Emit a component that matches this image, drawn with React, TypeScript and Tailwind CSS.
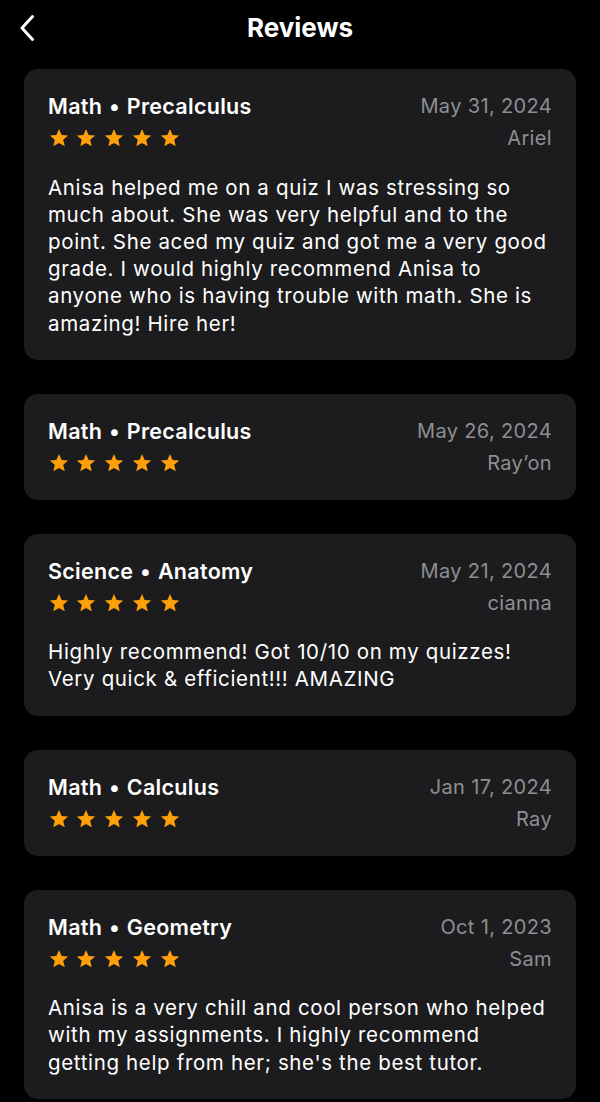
import React from "react";

type Review = {
  subject: string;
  topic: string;
  date: string;
  name: string;
  body?: string[];
};

const reviews: Review[] = [
  {
    subject: "Math",
    topic: "Precalculus",
    date: "May 31, 2024",
    name: "Ariel",
    body: [
      "Anisa helped me on a quiz I was stressing so",
      "much about. She was very helpful and to the",
      "point. She aced my quiz and got me a very good",
      "grade. I would highly recommend Anisa to",
      "anyone who is having trouble with math. She is",
      "amazing! Hire her!",
    ],
  },
  { subject: "Math", topic: "Precalculus", date: "May 26, 2024", name: "Ray\u2019on" },
  {
    subject: "Science",
    topic: "Anatomy",
    date: "May 21, 2024",
    name: "cianna",
    body: ["Highly recommend! Got 10/10 on my quizzes!", "Very quick & efficient!!! AMAZING"],
  },
  { subject: "Math", topic: "Calculus", date: "Jan 17, 2024", name: "Ray" },
  {
    subject: "Math",
    topic: "Geometry",
    date: "Oct 1, 2023",
    name: "Sam",
    body: [
      "Anisa is a very chill and cool person who helped",
      "with my assignments. I highly recommend",
      "getting help from her; she's the best tutor.",
    ],
  },
];

function Star() {
  return (
    <svg width="20" height="20" viewBox="0 0 24 24" className="shrink-0">
      <path
        d="M12 1.2l3.15 7.25 7.85.62-5.95 5.15 1.82 7.7L12 17.9l-6.87 4.02 1.82-7.7L1 9.07l7.85-.62z"
        fill="#ff9f0a"
      />
    </svg>
  );
}

function Card({ r }: { r: Review }) {
  return (
    <div className="rounded-[14px] bg-[#1c1c1e] px-6 pt-[23px] pb-[23px]">
      <div className="flex items-center justify-between">
        <div className="text-[21.5px] leading-[28px] font-semibold tracking-[0.3px] text-white">
          {r.subject} <span className="px-[1px]">•</span> {r.topic}
        </div>
        <div className="text-[20px] leading-[28px] tracking-[0.35px] text-[#8e8e93]">{r.date}</div>
      </div>
      <div className="mt-[4px] flex items-center justify-between">
        <div className="flex items-center gap-[7.75px] pl-[0.5px]">
          <Star />
          <Star />
          <Star />
          <Star />
          <Star />
        </div>
        <div className="text-[20px] leading-[28px] tracking-[0.35px] text-[#8e8e93]">{r.name}</div>
      </div>
      {r.body && (
        <div className="mt-[21.5px] text-[20.5px] leading-[27.2px] tracking-[0.65px] text-white">
          {r.body.map((l, i) => (
            <div key={i} className="whitespace-nowrap">
              {l}
            </div>
          ))}
        </div>
      )}
    </div>
  );
}

export default function App() {
  return (
    <div
      className="min-h-[1102px] w-[600px] bg-black"
      style={{ fontFamily: "Inter, 'Noto Sans', sans-serif" }}
    >
      <div className="relative flex h-[55px] items-center justify-center">
        <svg
          className="absolute left-0 top-0"
          width="60"
          height="55"
          viewBox="0 0 60 55"
          fill="none"
        >
          <path
            d="M32.5 16.5L22 28 32.5 39.5"
            stroke="white"
            strokeWidth="3"
            strokeLinecap="round"
            strokeLinejoin="round"
          />
        </svg>
        <div className="text-[26px] font-bold text-white">Reviews</div>
      </div>
      <div className="flex flex-col gap-[34px] px-6 pt-[14px]">
        {reviews.map((r, i) => (
          <Card key={i} r={r} />
        ))}
      </div>
    </div>
  );
}
